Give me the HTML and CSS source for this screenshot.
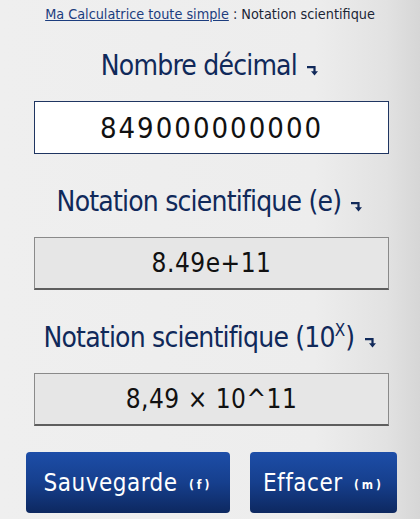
FILE: index.html
```html
<!DOCTYPE html>
<html lang="fr">
<head>
<meta charset="utf-8">
<title>Notation scientifique</title>
<link rel="stylesheet" href="styles.css">
</head>
<body>
<div class="page">
  <div class="crumb"><a href="#">Ma Calculatrice toute simple</a> : Notation scientifique</div>

  <h2 class="label first">Nombre décimal <svg class="arr" viewBox="0 0 12 10" width="12" height="10"><path d="M0 1.2H7.5V6" fill="none" stroke="currentColor" stroke-width="2.2"/><path d="M4 5.3H11L7.5 9.6Z" fill="currentColor"/></svg></h2>
  <div class="box input">849000000000</div>

  <h2 class="label">Notation scientifique (e) <svg class="arr" viewBox="0 0 12 10" width="12" height="10"><path d="M0 1.2H7.5V6" fill="none" stroke="currentColor" stroke-width="2.2"/><path d="M4 5.3H11L7.5 9.6Z" fill="currentColor"/></svg></h2>
  <div class="box output">8.49e+11</div>

  <h2 class="label">Notation scientifique (10<sup>X</sup>) <svg class="arr" viewBox="0 0 12 10" width="12" height="10"><path d="M0 1.2H7.5V6" fill="none" stroke="currentColor" stroke-width="2.2"/><path d="M4 5.3H11L7.5 9.6Z" fill="currentColor"/></svg></h2>
  <div class="box output last">8,49 × 10^11</div>

  <div class="buttons">
    <button class="btn save">Sauvegarde <span class="key">(f)</span></button>
    <button class="btn clear">Effacer <span class="key">(m)</span></button>
  </div>
</div>
</body>
</html>
```

FILE: styles.css
```css
html, body {
  margin: 0;
  padding: 0;
}
body {
  width: 420px;
  height: 519px;
  overflow: hidden;
  background: linear-gradient(to right, #efefef 0%, #ededed 75%, #e2e2e2 92%, #d6d6d6 100%);
  font-family: "DejaVu Sans Condensed", "DejaVu Sans", sans-serif;
}
.page {
  display: flex;
  flex-direction: column;
  align-items: center;
  padding-top: 4px;
}
.crumb {
  font-size: 14.3px;
  color: #1b2535;
  line-height: 20px;
}
.crumb a {
  color: #1c3d7e;
  text-decoration: underline;
}
.label {
  margin: 30px 0 0 0;
  font-weight: normal;
  font-size: 28px;
  letter-spacing: -0.8px;
  color: #10295a;
  line-height: 36px;
  text-align: center;
}
.label.first {
  margin-top: 24px;
}
.label sup {
  font-size: 17px;
  line-height: 0;
  vertical-align: 11px;
  letter-spacing: 0;
}
.arr {
  color: #10295a;
  vertical-align: -1px;
  margin-left: 3px;
}
.box {
  box-sizing: border-box;
  width: 355px;
  height: 53px;
  margin-top: 17px;
  margin-left: 3px;
  display: flex;
  align-items: center;
  justify-content: center;
  color: #111;
}
.input {
  background: #fff;
  border: 1px solid #1f3561;
  font-size: 29px;
  letter-spacing: 2px;
}
.output {
  background: #e6e6e6;
  border: 1px solid #8a8a8a;
  border-bottom: 2px solid #5e5e5e;
  font-size: 26px;
  letter-spacing: 0.5px;
}
.buttons {
  display: flex;
  gap: 20px;
  margin-top: 26px;
  margin-left: 3px;
}
.btn {
  height: 61px;
  border: none;
  border-radius: 4px;
  background: linear-gradient(to bottom, #1d4ea8 0%, #163f8d 50%, #0d2860 100%);
  color: #fff;
  font-family: "DejaVu Sans Condensed", "DejaVu Sans", sans-serif;
  font-size: 24px;
  letter-spacing: 0.5px;
  padding: 0;
}
.save { width: 204px; }
.clear { width: 147px; }
.key {
  font-size: 12px;
  font-weight: bold;
  letter-spacing: 3px;
  margin-left: 4px;
  vertical-align: 2px;
}
```
